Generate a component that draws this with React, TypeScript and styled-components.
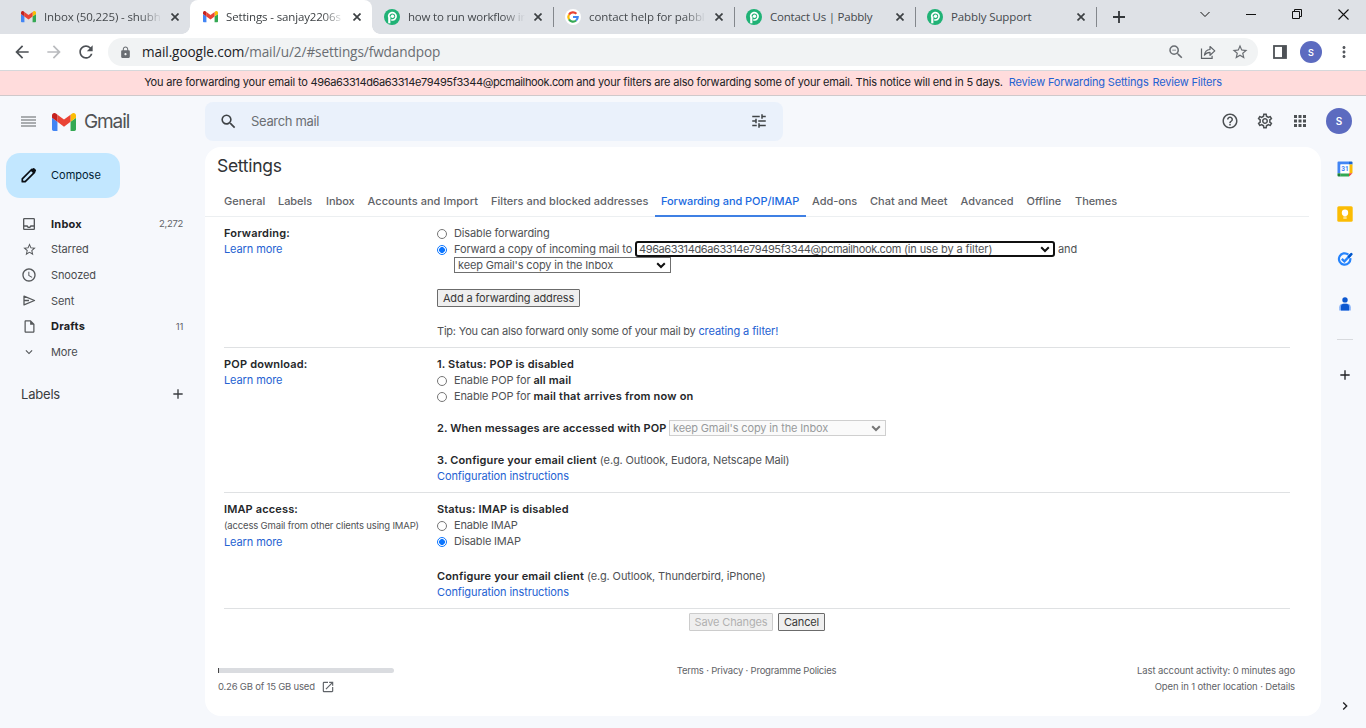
import React from "react";
import styled, { createGlobalStyle, css } from "styled-components";
import {
  MdArrowBack, MdArrowForward, MdRefresh, MdLock, MdZoomOut, MdStarBorder, MdMoreVert,
  MdHelpOutline, MdOutlineSettings, MdApps, MdSearch, MdTune, MdOutlineInbox, MdSchedule,
  MdOutlineInsertDriveFile, MdKeyboardArrowDown, MdAdd, MdOpenInNew, MdChevronRight,
} from "react-icons/md";

const Global = createGlobalStyle`
  * { box-sizing: border-box; }
  body { margin: 0; background: #f6f8fc; overflow: hidden; }
  svg { display: block; flex: none; }
`;

const ui = `"Open Sans", "Noto Sans", sans-serif`;
const sans = `Inter, Roboto, sans-serif`;

const Page = styled.div`
  width: 1366px; height: 728px; display: flex; flex-direction: column;
  background: #f6f8fc; font-family: ${sans}; font-size: 11px; color: #505255; overflow: hidden;
`;
const T = styled.span<{ $track?: number; $w?: number; $ml?: number }>`
  white-space: pre; letter-spacing: ${(p) => p.$track ?? -0.13}px;
  ${(p) => p.$w !== undefined && css`width: ${p.$w}px; flex: none;`}
  margin-left: ${(p) => p.$ml ?? 0}px;
`;

/* ---------- browser chrome ---------- */
const TabStrip = styled.div`
  height: 34px; background: #dee1e6; display: flex; align-items: stretch; flex: none;
`;
const Tab = styled.div<{ $w: number; $pl: number; $pr: number; $active?: boolean; $sep?: boolean }>`
  position: relative; width: ${(p) => p.$w}px; flex: none; display: flex; align-items: center;
  padding: 0 ${(p) => p.$pr}px 0 ${(p) => p.$pl}px; font-family: ${ui}; font-size: 11.5px; color: #45494d;
  ${(p) => p.$active && css`
    background: #fff; border-radius: 8px 8px 0 0; color: #3c4043;
    &::before, &::after {
      content: ""; position: absolute; bottom: 0; width: 8px; height: 8px;
    }
    &::before { left: -8px; background: radial-gradient(circle at 0 0, transparent 7.5px, #fff 8px); }
    &::after { right: -8px; background: radial-gradient(circle at 100% 0, transparent 7.5px, #fff 8px); }
  `}
  ${(p) => p.$sep && css`
    &::after { content: ""; position: absolute; right: 0; top: 7px; width: 1px; height: 20px; background: #83878c; }
  `}
`;
const TabTitle = styled.span<{ $fade?: boolean; $track: number }>`
  flex: 1; margin-left: 8px; overflow: hidden; white-space: nowrap; line-height: 18px;
  letter-spacing: ${(p) => p.$track}px;
  ${(p) => p.$fade && css`mask-image: linear-gradient(to right, #000 calc(100% - 22px), transparent);`}
`;
const TabClose = styled.span`margin-left: 9px; display: flex;`;
const NewTab = styled.div`width: 44px; display: flex; align-items: center; justify-content: center;`;
const WindowButtons = styled.div`
  margin-left: auto; display: flex; align-items: center; height: 28px;
`;
const WinBtn = styled.div`width: 46px; display: flex; justify-content: center;`;

const Toolbar = styled.div`
  height: 37px; flex: none; background: #fff; border-bottom: 1px solid #d6d8db; display: flex;
  align-items: center; padding: 0 10px 0 11px; color: #55595e;
`;
const NavBtn = styled.div<{ $dim?: boolean }>`
  width: 32px; display: flex; align-items: center; padding-left: 1px; color: ${(p) => (p.$dim ? "#b9bbbe" : "#4d5156")};
`;
const Omnibox = styled.div`
  width: 1150px; height: 28px; border-radius: 14px; background: #f1f3f4; display: flex; align-items: center;
  padding: 0 9px 0 11px; margin-left: 1px; font-family: ${ui}; font-size: 13.6px; color: #6a6e73;
`;
const Url = styled.span`
  margin: 0 0 2px 10px; white-space: nowrap; letter-spacing: -0.09px;
  b { font-weight: 400; color: #202124; }
`;
const OmniTail = styled.div`margin-left: auto; display: flex; align-items: center; gap: 15px;`;
const ToolbarTail = styled.div`flex: 1; display: flex; align-items: center; padding-left: 15px; gap: 13px;`;
const Avatar = styled.div<{ $size: number; $fs: number }>`
  width: ${(p) => p.$size}px; height: ${(p) => p.$size}px; border-radius: 50%; background: #5c6bc0; color: #fff;
  font: 600 ${(p) => p.$fs}px/1 ${sans}; display: flex; align-items: center; justify-content: center; flex: none;
`;

const Banner = styled.div`
  height: 25px; flex: none; background: #ffdcdc; border-bottom: 1px solid #cfc9cb; color: #202124;
  display: flex; align-items: center; justify-content: center; padding: 0 0 2px 0;
`;

const Link = styled.a<{ $track?: number; $ml?: number }>`
  color: #2562d2; white-space: pre; letter-spacing: ${(p) => p.$track ?? -0.1}px; margin-left: ${(p) => p.$ml ?? 0}px;
`;

/* ---------- mail app ---------- */
const AppBody = styled.div`flex: 1; display: flex; min-height: 0;`;
const Sidebar = styled.div`width: 205px; flex: none; display: flex; flex-direction: column;`;
const Brand = styled.div`
  height: 51px; display: flex; align-items: center; padding-left: 21px; color: #505355;
`;
const BrandLogo = styled.span`margin-left: 16px;`;
const BrandName = styled.span`margin-left: 8px; font-size: 19px; letter-spacing: -1.1px;`;
const Compose = styled.div`
  margin: 6px 0 0 6px; width: 114px; height: 45px; border-radius: 14px; background: #c2e7ff; color: #001d35;
  display: flex; align-items: center; padding: 0 0 1px 15px; gap: 14px;
`;
const NavList = styled.div`margin-top: 13px;`;
const NavRow = styled.div<{ $bold?: boolean }>`
  height: 25.6px; display: flex; align-items: center; padding: 0 22px 0 21px;
  font-weight: ${(p) => (p.$bold ? 700 : 400)}; color: ${(p) => (p.$bold ? "#202124" : "#4a4c4f")};
`;
const NavIcon = styled.span`width: 16px; margin-right: 14px; display: flex; justify-content: center; color: #55585b;`;
const Count = styled.span`margin-left: auto; font-size: 9.5px; font-weight: 400; letter-spacing: -0.3px; color: #5f6368;`;
const LabelsHead = styled.div`
  margin-top: 18px; height: 22px; display: flex; align-items: center; justify-content: space-between;
  padding: 0 19px 0 21px; font-size: 13px; color: #3a3d40;
`;

const Main = styled.div`flex: 1; display: flex; flex-direction: column;`;
const TopBar = styled.div`height: 51px; flex: none; display: flex; align-items: center; padding-right: 14px;`;
const Lower = styled.div`flex: 1; display: flex; align-items: stretch;`;
const Search = styled.div`
  width: 578px; height: 39px; border-radius: 8px; background: #eaf1fb; display: flex; align-items: center;
  padding: 0 15px 1px 14px; color: #3f4346;
`;
const SearchHint = styled.span`flex: 1; margin-left: 13px; font-size: 13px; letter-spacing: -0.33px; color: #6b6f73;`;
const TopIcons = styled.div`
  display: flex; align-items: center; margin-left: auto; gap: 17px; padding-bottom: 1px; color: #4d5154;
`;
const Card = styled.div`
  width: 1116px; height: 569px; border-radius: 16px; background: #fff; display: flex; flex-direction: column; flex: none;
`;
const Title = styled.div`
  height: 39px; padding: 0 0 0 12px; line-height: 38px; font-size: 17.5px; letter-spacing: -0.3px; color: #303336;
`;
const Tabs = styled.div`
  height: 31px; margin: 0 12px 0 0; padding-left: 12.5px; border-bottom: 1px solid #eceff1; display: flex;
`;
const SettingsTab = styled.div<{ $w: number; $on?: boolean; $track?: number }>`
  width: ${(p) => p.$w}px; height: 31px; padding-left: 6.5px; line-height: 30px; white-space: nowrap; font-weight: 500;
  letter-spacing: ${(p) => p.$track ?? -0.05}px; color: ${(p) => (p.$on ? "#1a6ae0" : "#5f6368")};
  ${(p) => p.$on && css`box-shadow: inset 0 -2px 0 #3f80e4;`}
`;
const Section = styled.div`
  margin: 0 31px 0 19px; padding: 8px 0; display: flex; border-bottom: 1px solid #dfe1e3;
`;
const Side = styled.div`width: 213px; flex: none;`;
const Fields = styled.div`flex: 1;`;
const Line = styled.div<{ $indent?: boolean; $gap?: number }>`
  height: 16px; display: flex; align-items: center; margin-top: ${(p) => p.$gap ?? 0}px;
  padding-left: ${(p) => (p.$indent ? 17 : 0)}px;
`;
const Strong = styled.b<{ $track?: number; $w?: number }>`
  font-weight: 600; color: #25272a; white-space: pre; letter-spacing: ${(p) => p.$track ?? 0.14}px;
  ${(p) => p.$w !== undefined && css`width: ${p.$w}px; flex: none;`}
`;
const Small = styled.span`font-size: 9.5px; letter-spacing: -0.16px; white-space: nowrap;`;
const Radio = styled.span<{ $on?: boolean }>`
  width: 10px; height: 10px; border-radius: 50%; margin: 2px 7px 0 0; flex: none;
  border: 1px solid ${(p) => (p.$on ? "#0b75ff" : "#767676")};
  background: ${(p) => (p.$on ? "radial-gradient(circle, #0b75ff 2.6px, #fff 3.2px)" : "#fff")};
`;
const Select = styled.span<{ $w: number; $focus?: boolean; $off?: boolean }>`
  width: ${(p) => p.$w}px; height: 16px; border: 1px solid #6f6f6f; display: flex; align-items: center;
  padding: 0 4px 0 3px; background: #fff; flex: none;
  svg { margin-left: auto; }
  ${(p) => p.$focus && css`border: 2px solid #101010; border-radius: 3px; padding: 0 3px 0 2px;`}
  ${(p) => p.$off && css`border-color: #cfcfcf; color: #989a9c; background: #fafafa;`}
`;
const Button = styled.span<{ $w: number; $off?: boolean }>`
  width: ${(p) => p.$w}px; height: 18px; border: 1px solid ${(p) => (p.$off ? "#cccccc" : "#6b6b6b")};
  border-radius: 1px; background: #efefef; color: ${(p) => (p.$off ? "#b1b1b1" : "#383838")}; letter-spacing: -0.14px;
  display: flex; align-items: center; justify-content: center; white-space: nowrap; flex: none;
`;
const Actions = styled.div`margin: 4px 0 0 484px; display: flex; gap: 5px;`;
const Footer = styled.div`
  margin: 32px 26px 0 13px; display: flex; justify-content: space-between; font-size: 9.5px; line-height: 16px; color: #5f6368;
`;
const Quota = styled.div`width: 176px;`;
const QuotaBar = styled.div`
  margin-top: 5px; height: 5px; background: #dadce0; border-left: 1px solid #444; border-radius: 0 3px 3px 0;
`;
const QuotaText = styled.div`margin-top: 6px; display: flex; align-items: center; gap: 6px; height: 16px;`;
const Activity = styled.div`width: 176px; white-space: nowrap; display: flex; flex-direction: column; align-items: flex-end;`;

const Rail = styled.div`
  flex: 1; display: flex; flex-direction: column; align-items: center; padding: 14px 0 0 2px; color: #202124;
`;
const RailIcon = styled.div`height: 16px; margin-bottom: 29px; display: flex; align-items: center;`;
const RailRule = styled.div`width: 16px; height: 1px; flex: none; background: #d8dade; margin: -2px 0 27px;`;
const RailEnd = styled.div`margin: auto 0 14px;`;

/* ---------- drawings ---------- */
const GmailMark = ({ w }: { w: number }) => (
  <svg width={w} height={w * 0.75} viewBox="52 42 88 66">
    <path fill="#4285f4" d="M58 108h14V74L52 59v43c0 3.32 2.69 6 6 6" />
    <path fill="#34a853" d="M120 108h14c3.32 0 6-2.69 6-6V59l-20 15" />
    <path fill="#fbbc04" d="M120 48v26l20-15v-8c0-7.42-8.47-11.65-14.4-7.2" />
    <path fill="#ea4335" d="M72 74V48l24 18 24-18v26L96 92" />
    <path fill="#c5221f" d="M52 51v8l20 15V48l-5.6-4.2c-5.94-4.45-14.4-.22-14.4 7.2" />
  </svg>
);
const PabblyMark = () => (
  <svg width="16" height="16" viewBox="0 0 16 16">
    <circle cx="8" cy="8" r="8" fill="#20b276" />
    <path d="M4.8 8.2A3.7 3.7 0 1 1 8.5 11H7.2" fill="none" stroke="#fff" strokeWidth="1.7" />
    <path d="M5.3 7.5v6.8" stroke="#fff" strokeWidth="2.2" />
    <circle cx="8.5" cy="7.3" r="1.7" fill="#fff" />
  </svg>
);
const GoogleMark = () => (
  <svg width="16" height="16" viewBox="0 0 16 16">
    <circle cx="8" cy="8" r="8" fill="#fff" />
    <g fill="none" strokeWidth="2.2">
      <path stroke="#ea4335" d="M4 5.6A4.7 4.7 0 0 1 11.4 4.7" />
      <path stroke="#fbbc05" d="M4 5.6a4.7 4.7 0 0 0 0 4.8" />
      <path stroke="#34a853" d="M4 10.4a4.7 4.7 0 0 0 7.1 1.1" />
      <path stroke="#4285f4" d="M11.1 11.5A4.7 4.7 0 0 0 12.7 8H8" />
    </g>
  </svg>
);
const Cross = ({ s = 8, w = 1.7, c = "#3c4043" }) => (
  <svg width={s} height={s} viewBox={`0 0 ${s} ${s}`}>
    <path d={`M.5 .5L${s - 0.5} ${s - 0.5}M${s - 0.5} .5L.5 ${s - 0.5}`} stroke={c} strokeWidth={w} />
  </svg>
);
const Chevron = ({ c = "#101010" }) => (
  <svg width="10" height="7" viewBox="0 0 10 7">
    <path d="M1.2 1.2L5 5L8.8 1.2" fill="none" stroke={c} strokeWidth="2" />
  </svg>
);
const ShareIcon = () => (
  <svg width="16" height="16" viewBox="0 0 16 16" fill="none" stroke="#5f6368" strokeWidth="1.2">
    <path d="M1.5 4.5v9.9h10.6v-2.6" />
    <path d="M4.4 11.2C4.8 7.6 6.7 5.7 10 5.5V2.5l4.8 4.4-4.8 4.4V8.4C7.5 8.4 5.8 9.2 4.4 11.2z" strokeLinejoin="round" />
  </svg>
);
const PanelIcon = () => (
  <svg width="14" height="14" viewBox="0 0 14 14">
    <rect x="1" y="1" width="12" height="12" fill="#fff" stroke="#4d5156" strokeWidth="1.8" />
    <rect x="9" y="1" width="4" height="12" fill="#4d5156" />
  </svg>
);
const MenuLines = () => (
  <svg width="15" height="11" viewBox="0 0 15 11">
    <path d="M0 1h15M0 4h15M0 7h15M0 10h15" stroke="#5f6265" strokeWidth="1.2" />
  </svg>
);
const PencilIcon = () => (
  <svg width="16" height="16" viewBox="0 0 16 16">
    <path d="M1.3 14.7v-2.9L10.6 2.5l2.9 2.9-9.3 9.3z" fill="none" stroke="#0b0f14" strokeWidth="1.7" strokeLinejoin="round" />
    <path d="M9.4 3.5l2.1-2.1a1.5 1.5 0 0 1 2.1 0l1 1a1.5 1.5 0 0 1 0 2.1l-2.1 2.1z" fill="#0b0f14" />
  </svg>
);
const SendIcon = () => (
  <svg width="13" height="11" viewBox="0 0 13 11">
    <path d="M1 1.1L11.5 5.5 1 9.9z" fill="none" stroke="#55585b" strokeWidth="1.3" strokeLinejoin="round" />
    <path d="M1 5.5h5" stroke="#55585b" strokeWidth="1.5" />
  </svg>
);
const CalendarMark = () => (
  <svg width="16" height="16" viewBox="0 0 16 16">
    <path fill="#4285f4" d="M1.5 .5H12v3H3.5V12H.5V1.5a1 1 0 0 1 1-1z" />
    <path fill="#1967d2" d="M12 .5h2.5a1 1 0 0 1 1 1v2H12z" />
    <path fill="#fbbc04" d="M12.3 3.5h3.2V12h-3.2z" />
    <path fill="#34a853" d="M3.5 12.3H12v3.2H3.5z" />
    <path fill="#188038" d="M.5 12.3h3v3.2h-2a1 1 0 0 1-1-1z" />
    <path fill="#ea4335" d="M12 12.3h3.5L12 15.5z" />
    <path fill="#fff" d="M3.5 3.5h8.8v8.8H3.5z" />
    <text x="7.9" y="10.4" fontSize="6.5" fontWeight="700" fontFamily="Roboto" textAnchor="middle" fill="#4285f4">31</text>
  </svg>
);
const KeepMark = () => (
  <svg width="16" height="16" viewBox="0 0 16 16">
    <rect x=".3" y=".3" width="15.4" height="15.4" rx="1.5" fill="#fbbc04" />
    <circle cx="8" cy="6.8" r="3.2" fill="#fff" />
    <path d="M6.500 9h3v1.600h-3zM6.300 11.400h3.400v1.200H6.300z" fill="#fff" />
  </svg>
);
const TasksMark = () => (
  <svg width="16" height="16" viewBox="0 0 16 16" fill="none">
    <path d="M11.4 3.7A5.7 5.7 0 1 0 13.3 7.2" stroke="#2684fc" strokeWidth="2.2" />
    <path d="M4.8 7.8l2.6 2.5 6-6.2" stroke="#2684fc" strokeWidth="2.3" />
    <path d="M12 5.6l2.3-2.4" stroke="#0057cc" strokeWidth="2.6" strokeLinecap="round" />
  </svg>
);
const ContactsMark = () => (
  <svg width="14" height="16" viewBox="0 0 14 16">
    <circle cx="7" cy="3.9" r="2.7" fill="#0b57d0" />
    <path d="M1.300 14.500v-3.200A3.600 3.600 0 0 1 4.700 7.800h4.600a3.600 3.600 0 0 1 3.400 3.500v3.200z" fill="#7baaf7" />
    <path d="M3 14.500v-3.200a3.200 3.200 0 0 1 2.500-3.500h3a3.200 3.200 0 0 1 2.500 3.500v3.200z" fill="#0b57d0" />
  </svg>
);

const browserTabs = [
  { icon: "mail", title: "Inbox (50,225) - shubh", w: 190, pl: 21, pr: 11, fade: true, track: -0.12 },
  { icon: "mail", title: "Settings - sanjay2206s", w: 182, pl: 13, pr: 11, fade: true, active: true, track: -0.15 },
  { icon: "pabbly", title: "how to run workflow in", w: 182, pl: 12, pr: 12, fade: true, sep: true, track: -0.2 },
  { icon: "google", title: "contact help for pabbl", w: 181, pl: 11, pr: 12, fade: true, sep: true, track: -0.1 },
  { icon: "pabbly", title: "Contact Us | Pabbly", w: 181, pl: 11, pr: 12, sep: true, track: -0.22 },
  { icon: "pabbly", title: "Pabbly Support", w: 181, pl: 11, pr: 12, sep: true, track: -0.12 },
];

const settingsTabs = [
  { t: "General", w: 54, k: 0.04 }, { t: "Labels", w: 48 }, { t: "Inbox", w: 41.5 },
  { t: "Accounts and Import", w: 123.5, k: 0.04 }, { t: "Filters and blocked addresses", w: 170, k: 0.01 },
  { t: "Forwarding and POP/IMAP", w: 151, k: -0.06, on: true }, { t: "Add-ons", w: 58 },
  { t: "Chat and Meet", w: 90.5, k: 0.05 }, { t: "Advanced", w: 66 }, { t: "Offline", w: 48.5 },
  { t: "Themes", w: 55 },
];

const folders = [
  { t: "Inbox", icon: <MdOutlineInbox size={16} />, n: "2,272", bold: true },
  { t: "Starred", icon: <MdStarBorder size={15} /> },
  { t: "Snoozed", icon: <MdSchedule size={16} /> },
  { t: "Sent", icon: <SendIcon /> },
  { t: "Drafts", icon: <MdOutlineInsertDriveFile size={15} />, n: "11", bold: true },
  { t: "More", icon: <MdKeyboardArrowDown size={14} /> },
];

const address = "496a63314d6a63314e79495f3344@pcmailhook.com";

export default function App() {
  return (
    <Page>
      <Global />
      <TabStrip>
        {browserTabs.map((t, i) => (
          <Tab key={i} $w={t.w} $pl={t.pl} $pr={t.pr} $active={t.active} $sep={t.sep}>
            {t.icon === "mail" ? <GmailMark w={15} /> : t.icon === "google" ? <GoogleMark /> : <PabblyMark />}
            <TabTitle $fade={t.fade} $track={t.track}>{t.title}</TabTitle>
            <TabClose><Cross /></TabClose>
          </Tab>
        ))}
        <NewTab><svg width="12" height="12" viewBox="0 0 12 12"><path d="M6 0v12M0 6h12" stroke="#33373a" strokeWidth="1.8" /></svg></NewTab>
        <WindowButtons>
          <WinBtn><svg width="10" height="7" viewBox="0 0 10 7"><path d="M.5 1L5 5.5L9.5 1" fill="none" stroke="#111" /></svg></WinBtn>
          <WinBtn><svg width="10" height="3" viewBox="0 0 10 3"><path d="M0 1.5h10" stroke="#111" /></svg></WinBtn>
          <WinBtn><svg width="10" height="10" viewBox="0 0 10 10" fill="none" stroke="#111"><path d="M.5 2.5h7v7h-7zM2.5 2.5v-2h7v7h-2" /></svg></WinBtn>
          <WinBtn><Cross s={11} w={1.1} c="#111" /></WinBtn>
        </WindowButtons>
      </TabStrip>
      <Toolbar>
        <NavBtn><MdArrowBack size={20} /></NavBtn>
        <NavBtn $dim><MdArrowForward size={20} /></NavBtn>
        <NavBtn><MdRefresh size={20} /></NavBtn>
        <Omnibox>
          <MdLock size={13} />
          <Url><b>mail.google.com</b>/mail/u/2/#settings/fwdandpop</Url>
          <OmniTail><MdZoomOut size={18} /><ShareIcon /><MdStarBorder size={18} /></OmniTail>
        </Omnibox>
        <ToolbarTail>
          <PanelIcon />
          <Avatar $size={22} $fs={9}>S</Avatar>
          <MdMoreVert size={18} />
        </ToolbarTail>
      </Toolbar>
      <Banner>
        <T $track={-0.17}>You are forwarding your email to </T>
        <T $track={-0.37}>{address}</T>
        <T $track={-0.19}> and your filters are also forwarding some of your email. This notice will end in 5 days.</T>
        <Link $track={-0.17} $ml={6}>Review Forwarding Settings</Link>
        <Link $track={-0.2} $ml={4}>Review Filters</Link>
      </Banner>
      <AppBody>
        <Sidebar>
          <Brand><MenuLines /><BrandLogo><GmailMark w={24} /></BrandLogo><BrandName>Gmail</BrandName></Brand>
          <Compose><PencilIcon /><T $track={0}>Compose</T></Compose>
          <NavList>
            {folders.map((f) => (
              <NavRow key={f.t} $bold={f.bold}>
                <NavIcon>{f.icon}</NavIcon><T $track={f.bold ? 0.22 : -0.1}>{f.t}</T>{f.n && <Count>{f.n}</Count>}
              </NavRow>
            ))}
          </NavList>
          <LabelsHead><T $track={-0.2}>Labels</T><MdAdd size={16} /></LabelsHead>
        </Sidebar>
        <Main>
          <TopBar>
            <Search><MdSearch size={19} /><SearchHint>Search mail</SearchHint><MdTune size={18} /></Search>
            <TopIcons>
              <MdHelpOutline size={18} /><MdOutlineSettings size={18} /><MdApps size={18} /><Avatar $size={26} $fs={10}>S</Avatar>
            </TopIcons>
          </TopBar>
          <Lower>
            <Card>
              <Title>Settings</Title>
              <Tabs>
                {settingsTabs.map((t) => <SettingsTab key={t.t} $w={t.w} $on={t.on} $track={t.k}>{t.t}</SettingsTab>)}
              </Tabs>
              <Section>
                <Side>
                  <Line><Strong $track={0.2}>Forwarding:</Strong></Line>
                  <Line><Link>Learn more</Link></Line>
                </Side>
                <Fields>
                  <Line><Radio /><T>Disable forwarding</T></Line>
                  <Line><Radio $on /><T $w={181}>Forward a copy of incoming mail to</T>
                    <Select $w={420} $focus><T $track={-0.39}>{address}</T><T $track={-0.12}> (in use by a filter)</T><Chevron /></Select>
                    <T $ml={3}>and</T></Line>
                  <Line $indent><Select $w={217}><T>keep Gmail's copy in the Inbox</T><Chevron /></Select></Line>
                  <Line $gap={17}><Button $w={143}>Add a forwarding address</Button></Line>
                  <Line $gap={17}><T $track={-0.21}>Tip: You can also forward only some of your mail by </T><Link>creating a filter!</Link></Line>
                </Fields>
              </Section>
              <Section>
                <Side>
                  <Line><Strong $track={0.18}>POP download:</Strong></Line>
                  <Line><Link>Learn more</Link></Line>
                </Side>
                <Fields>
                  <Line><Strong>1. Status: POP is disabled</Strong></Line>
                  <Line><Radio /><T>Enable POP for </T><Strong $track={0.12}>all mail</Strong></Line>
                  <Line><Radio /><T>Enable POP for </T><Strong $track={0.19}>mail that arrives from now on</Strong></Line>
                  <Line $gap={16}><Strong $w={232} $track={0.1}>2. When messages are accessed with POP</Strong>
                    <Select $w={217} $off><T>keep Gmail's copy in the Inbox</T><Chevron c="#777" /></Select></Line>
                  <Line $gap={16}><Strong $track={0.13}>3. Configure your email client</Strong><T> (e.g. Outlook, Eudora, Netscape Mail)</T></Line>
                  <Line><Link>Configuration instructions</Link></Line>
                </Fields>
              </Section>
              <Section>
                <Side>
                  <Line><Strong>IMAP access:</Strong></Line>
                  <Line><Small>(access Gmail from other clients using IMAP)</Small></Line>
                  <Line $gap={1}><Link>Learn more</Link></Line>
                </Side>
                <Fields>
                  <Line><Strong>Status: IMAP is disabled</Strong></Line>
                  <Line><Radio /><T $track={-0.18}>Enable IMAP</T></Line>
                  <Line><Radio $on /><T $track={-0.18}>Disable IMAP</T></Line>
                  <Line $gap={19}><Strong>Configure your email client</Strong><T> (e.g. Outlook, Thunderbird, iPhone)</T></Line>
                  <Line><Link>Configuration instructions</Link></Line>
                </Fields>
              </Section>
              <Actions><Button $w={84} $off>Save Changes</Button><Button $w={47}>Cancel</Button></Actions>
              <Footer>
                <Quota><QuotaBar /><QuotaText><T $track={-0.2}>0.26 GB of 15 GB used</T><MdOpenInNew size={14} /></QuotaText></Quota>
                <T $track={-0.2}>Terms · Privacy · Programme Policies</T>
                <Activity><T $track={-0.11}>Last account activity: 0 minutes ago</T><T $track={-0.12}>Open in 1 other location · Details</T></Activity>
              </Footer>
            </Card>
            <Rail>
              <RailIcon><CalendarMark /></RailIcon>
              <RailIcon><KeepMark /></RailIcon>
              <RailIcon><TasksMark /></RailIcon>
              <RailIcon><ContactsMark /></RailIcon>
              <RailRule />
              <MdAdd size={16} />
              <RailEnd><MdChevronRight size={16} /></RailEnd>
            </Rail>
          </Lower>
        </Main>
      </AppBody>
    </Page>
  );
}
